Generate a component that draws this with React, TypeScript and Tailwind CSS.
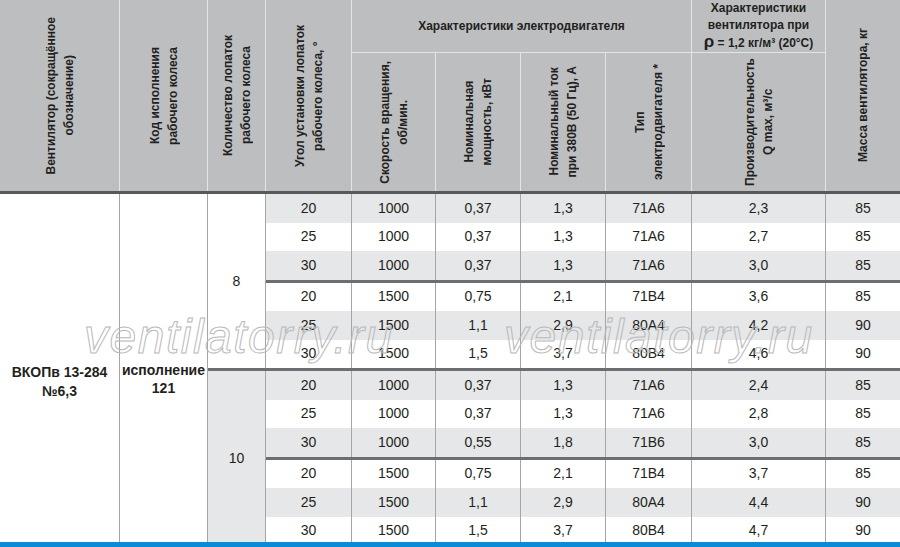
import type { ReactNode } from 'react';

const FONT = "font-['Liberation_Sans',Arial,sans-serif]";

type Row = [string, string, string, string, string, string, string];

const group8: Row[] = [
  ['20', '1000', '0,37', '1,3', '71А6', '2,3', '85'],
  ['25', '1000', '0,37', '1,3', '71А6', '2,7', '85'],
  ['30', '1000', '0,37', '1,3', '71А6', '3,0', '85'],
  ['20', '1500', '0,75', '2,1', '71В4', '3,6', '85'],
  ['25', '1500', '1,1', '2,9', '80А4', '4,2', '90'],
  ['30', '1500', '1,5', '3,7', '80В4', '4,6', '90'],
];

const group10: Row[] = [
  ['20', '1000', '0,37', '1,3', '71А6', '2,4', '85'],
  ['25', '1000', '0,37', '1,3', '71А6', '2,8', '85'],
  ['30', '1000', '0,55', '1,8', '71В6', '3,0', '85'],
  ['20', '1500', '0,75', '2,1', '71В4', '3,7', '85'],
  ['25', '1500', '1,1', '2,9', '80А4', '4,4', '90'],
  ['30', '1500', '1,5', '3,7', '80В4', '4,7', '90'],
];

// widths of the data columns, from "угол" to "масса"
const colW = ['w-[86px]', 'w-[84px]', 'w-[85px]', 'w-[85px]', 'w-[86px]', 'w-[134px]', 'w-[74px]'];

function VCell({ w, children, last }: { w: string; children: ReactNode; last?: boolean }) {
  return (
    <div
      className={`${w} h-full shrink-0 flex items-center justify-center ${
        last ? '' : 'border-r border-[#e3e4e5]'
      }`}
    >
      <div className="[writing-mode:vertical-rl] rotate-180 text-center leading-[18px] whitespace-nowrap">
        {children}
      </div>
    </div>
  );
}

function DataRow({ row, shaded }: { row: Row; shaded: boolean }) {
  return (
    <div className={`flex h-[28.5px] shrink-0 ${shaded ? 'bg-[#e6e7e8]' : 'bg-white'}`}>
      {row.map((v, i) => (
        <div
          key={i}
          className={`${colW[i]} shrink-0 flex items-center justify-center ${
            i < row.length - 1 ? 'border-r border-[#a3a5a8]' : ''
          }`}
        >
          {v}
        </div>
      ))}
    </div>
  );
}

function Group({ count, rows, shaded }: { count: string; rows: Row[]; shaded?: boolean }) {
  return (
    <div className="flex shrink-0">
      <div
        className={`w-[58px] shrink-0 flex items-center justify-center border-r border-[#a3a5a8] ${
          shaded ? 'bg-[#e6e7e8]' : 'bg-white'
        }`}
      >
        {count}
      </div>
      <div className="flex flex-col">
        {rows.slice(0, 3).map((r, i) => (
          <DataRow key={i} row={r} shaded={i % 2 === 0} />
        ))}
        <div className="h-[3px] bg-[#6d6e71]" />
        {rows.slice(3).map((r, i) => (
          <DataRow key={i} row={r} shaded={i % 2 === 1} />
        ))}
      </div>
    </div>
  );
}

export default function App() {
  return (
    <div className={`relative w-[900px] h-[547px] overflow-hidden flex flex-col bg-white text-[#231f20] ${FONT}`}>
      {/* Header */}
      <div className="flex h-[191px] shrink-0 bg-[#bcbec0] text-[12px] font-bold">
        <VCell w="w-[120px]">
          Вентилятор (сокращённое
          <br />
          обозначение)
        </VCell>
        <VCell w="w-[88px]">
          Код исполнения
          <br />
          рабочего колеса
        </VCell>
        <VCell w="w-[58px]">
          Количество лопаток
          <br />
          рабочего колеса
        </VCell>
        <VCell w="w-[86px]">
          Угол установки лопаток
          <br />
          рабочего колеса, °
        </VCell>

        <div className="w-[340px] shrink-0 flex flex-col border-r border-[#e3e4e5]">
          <div className="h-[53px] shrink-0 flex items-center justify-center border-b border-[#e3e4e5]">
            Характеристики электродвигателя
          </div>
          <div className="flex flex-1">
            <VCell w="w-[84px]">
              Скорость вращения,
              <br />
              об/мин.
            </VCell>
            <VCell w="w-[85px]">
              Номинальная
              <br />
              мощность, кВт
            </VCell>
            <VCell w="w-[85px]">
              Номинальный ток
              <br />
              при 380В (50 Гц), А
            </VCell>
            <VCell w="w-[86px]" last>
              Тип
              <br />
              электродвигателя *
            </VCell>
          </div>
        </div>

        <div className="w-[134px] shrink-0 flex flex-col border-r border-[#e3e4e5]">
          <div className="h-[53px] shrink-0 flex flex-col items-center justify-center border-b border-[#e3e4e5] leading-[16.5px] text-center whitespace-nowrap">
            <span>Характеристики</span>
            <span>вентилятора при</span>
            <span>
              <span className="text-[17px] leading-none">ρ</span> = 1,2 кг/м³ (20°С)
            </span>
          </div>
          <div className="flex-1">
            <VCell w="w-full" last>
              Производительность
              <br />
              Q max, м³/с
            </VCell>
          </div>
        </div>

        <VCell w="w-[74px]" last>
          Масса вентилятора, кг
        </VCell>
      </div>
      <div className="h-[3px] shrink-0 bg-[#58595b]" />

      {/* Body */}
      <div className="flex flex-1 min-h-0 overflow-hidden text-[14px]">
        <div className="w-[120px] shrink-0 border-r border-[#a3a5a8] pt-[169px] text-center font-bold leading-[19px]">
          ВКОПв 13-284
          <br />
          №6,3
        </div>
        <div className="w-[88px] shrink-0 border-r border-[#a3a5a8] pt-[167px] text-center font-bold leading-[18px]">
          исполнение
          <br />
          121
        </div>
        <div className="flex flex-col">
          <Group count="8" rows={group8} />
          <div className="h-[3px] shrink-0 bg-[#6d6e71]" />
          <Group count="10" rows={group10} shaded />
        </div>
      </div>
      <div className="h-[5px] shrink-0 bg-[#0a8bd8]" />

      {/* watermark */}
      <div className="pointer-events-none absolute left-[84px] top-[313px] italic text-[48px] leading-none tracking-[1.5px] text-transparent [-webkit-text-stroke:1px_#b8b9bb]">
        ventilatorry.ru
      </div>
      <div className="pointer-events-none absolute left-[504px] top-[313px] italic text-[48px] leading-none tracking-[1.5px] text-transparent [-webkit-text-stroke:1px_#b8b9bb]">
        ventilatorry.ru
      </div>
    </div>
  );
}
